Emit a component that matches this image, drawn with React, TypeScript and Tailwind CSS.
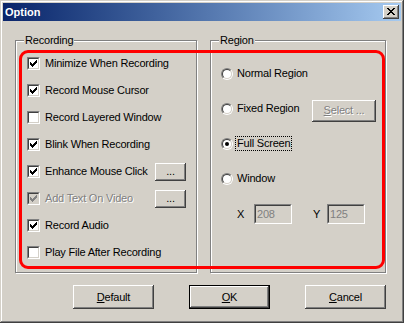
import React from "react";

const bevel =
  "shadow-[inset_-1px_-1px_0_#404040,inset_1px_1px_0_#ffffff,inset_-2px_-2px_0_#808080,inset_2px_2px_0_#d4d0c8]";

function CheckMark({ color }: { color: string }) {
  const ys = [2, 3, 4, 3, 2, 1, 0];
  return (
    <svg width="7" height="7" viewBox="0 0 7 7" shapeRendering="crispEdges" className="block">
      {ys.map((y, i) => (
        <rect key={i} x={i} y={y} width="1" height="3" fill={color} />
      ))}
    </svg>
  );
}

function CheckBox({ checked, disabled }: { checked?: boolean; disabled?: boolean }) {
  return (
    <span className="block w-[13px] h-[13px] shrink-0 border border-t-[#808080] border-l-[#808080] border-b-white border-r-white">
      <span
        className={`flex items-center justify-center w-full h-full border border-t-[#404040] border-l-[#404040] border-b-[#d4d0c8] border-r-[#d4d0c8] ${
          disabled ? "bg-[#d4d0c8]" : "bg-white"
        }`}
      >
        {checked && <CheckMark color={disabled ? "#808080" : "#000000"} />}
      </span>
    </span>
  );
}

function Radio({ checked }: { checked?: boolean }) {
  return (
    <span className="block w-[12px] h-[12px] shrink-0 rounded-full border border-t-[#808080] border-l-[#808080] border-b-white border-r-white">
      <span className="flex items-center justify-center w-full h-full rounded-full bg-white border border-t-[#404040] border-l-[#404040] border-b-[#d4d0c8] border-r-[#d4d0c8]">
        {checked && <span className="block w-[4px] h-[4px] rounded-full bg-black" />}
      </span>
    </span>
  );
}

function GroupBox({ label, className, children }: { label: string; className: string; children: React.ReactNode }) {
  return (
    <div className={`relative border border-[#808080] shadow-[inset_1px_1px_0_#ffffff,1px_1px_0_#ffffff] ${className}`}>
      <span className="absolute -top-[8px] left-[8px] bg-[#d4d0c8] px-[1px] leading-[14px]">{label}</span>
      {children}
    </div>
  );
}

function SmallButton({ children, disabled, className = "" }: { children: React.ReactNode; disabled?: boolean; className?: string }) {
  return (
    <div
      className={`flex items-center justify-center bg-[#d4d0c8] ${bevel} ${className} ${
        disabled ? "text-[#808080] [text-shadow:1px_1px_0_#ffffff]" : "text-black"
      }`}
    >
      {children}
    </div>
  );
}

const recording = [
  { label: "Minimize When Recording", checked: true },
  { label: "Record Mouse Cursor", checked: true },
  { label: "Record Layered Window", checked: false },
  { label: "Blink When Recording", checked: true },
  { label: "Enhance Mouse Click", checked: true, button: true },
  { label: "Add Text On Video", checked: true, disabled: true, button: true },
  { label: "Record Audio", checked: true },
  { label: "Play File After Recording", checked: false },
];

export default function App() {
  return (
    <div
      className="relative w-[404px] h-[323px] bg-[#d4d0c8] p-[3px] text-[11px] tracking-[-0.2px] text-black shadow-[inset_-1px_-1px_0_#404040,inset_1px_1px_0_#d4d0c8,inset_-2px_-2px_0_#808080,inset_2px_2px_0_#ffffff]"
      style={{ fontFamily: '"Liberation Sans", Arial, sans-serif' }}
    >
      {/* Title bar */}
      <div className="h-[18px] flex items-center justify-between bg-linear-to-r from-[#0a246a] to-[#a6caf0]">
        <span className="pl-[2px] text-white font-bold text-[11px] tracking-normal">Option</span>
        <div className={`mr-[2px] w-[16px] h-[14px] flex items-center justify-center bg-[#d4d0c8] ${bevel}`}>
          <svg width="8" height="7" viewBox="0 0 8 7" shapeRendering="crispEdges" className="block -mt-[1px]">
            {[0, 1, 2, 3, 2, 1, 0].map((x, y) => (
              <g key={y}>
                <rect x={x} y={y} width="2" height="1" fill="#000" />
                <rect x={6 - x} y={y} width="2" height="1" fill="#000" />
              </g>
            ))}
          </svg>
        </div>
      </div>

      {/* Group boxes */}
      <div className="flex gap-[13px] pl-[12px] mt-[19px]">
        <GroupBox label="Recording" className="w-[182px] h-[233px]">
          <div className="flex flex-col pt-[9px] pl-[11px] pr-[10px]">
            {recording.map((r) => (
              <div key={r.label} className="h-[27px] flex items-center">
                <CheckBox checked={r.checked} disabled={r.disabled} />
                <span
                  className={`ml-[5px] ${r.disabled ? "text-[#808080] [text-shadow:1px_1px_0_#ffffff]" : ""}`}
                >
                  {r.label}
                </span>
                {r.button && (
                  <SmallButton className="ml-auto w-[31px] h-[18px] leading-none">
                    <span className="-mt-[1px]">...</span>
                  </SmallButton>
                )}
              </div>
            ))}
          </div>
        </GroupBox>

        <GroupBox label="Region" className="w-[176px] h-[233px]">
          <div className="flex flex-col pt-[15px] pl-[10px] pr-[9px]">
            <div className="h-[35px] flex items-center">
              <Radio />
              <span className="ml-[4px]">Normal Region</span>
            </div>
            <div className="h-[35px] flex items-center">
              <Radio />
              <span className="ml-[4px]">Fixed Region</span>
              <SmallButton disabled className="ml-auto w-[64px] h-[22px] mt-[4px]">
                <span>
                  <u>S</u>elect ...
                </span>
              </SmallButton>
            </div>
            <div className="h-[35px] flex items-center">
              <Radio checked />
              <span className="ml-[3px] px-[1px] leading-[13px] outline outline-1 outline-dotted outline-black">Full Screen</span>
            </div>
            <div className="h-[35px] flex items-center">
              <Radio />
              <span className="ml-[4px]">Window</span>
            </div>
            <div className="h-[20px] mt-[8px] flex items-center pl-[16px]">
              <span className="w-[17px]">X</span>
              <div className="w-[38px] h-[20px] border border-t-[#808080] border-l-[#808080] border-b-white border-r-white">
                <div className="w-full h-full border border-t-[#404040] border-l-[#404040] border-b-[#d4d0c8] border-r-[#d4d0c8] bg-[#d4d0c8] text-[#808080] pl-[1px] leading-[16px]">
                  208
                </div>
              </div>
              <span className="w-[14px] ml-[21px]">Y</span>
              <div className="w-[38px] h-[20px] border border-t-[#808080] border-l-[#808080] border-b-white border-r-white">
                <div className="w-full h-full border border-t-[#404040] border-l-[#404040] border-b-[#d4d0c8] border-r-[#d4d0c8] bg-[#d4d0c8] text-[#808080] pl-[1px] leading-[16px]">
                  125
                </div>
              </div>
            </div>
          </div>
        </GroupBox>
      </div>

      {/* Dialog buttons */}
      <div className="flex justify-end gap-[35px] pr-[15px] mt-[12px]">
        <SmallButton className="w-[81px] h-[24px]">
          <span>
            <u>D</u>efault
          </span>
        </SmallButton>
        <div className="w-[81px] h-[24px] border border-black">
          <SmallButton className="w-full h-full">
            <span>
              <u>O</u>K
            </span>
          </SmallButton>
        </div>
        <SmallButton className="w-[81px] h-[24px]">
          <span>
            <u>C</u>ancel
          </span>
        </SmallButton>
      </div>

      {/* Red highlight annotation */}
      <div className="absolute left-[19px] top-[50px] w-[366px] h-[219px] border-[3px] border-[#ff0000] rounded-[9px] pointer-events-none" />
    </div>
  );
}
